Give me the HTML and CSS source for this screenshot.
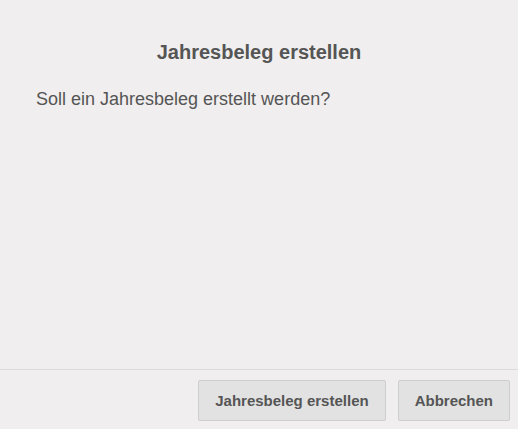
FILE: index.html
```html
<!DOCTYPE html>
<html lang="de">
<head>
    <meta charset="UTF-8">
    <title>Jahresbeleg erstellen</title>
    <link rel="stylesheet" href="styles.css">
</head>
<body>
    <div class="dialog">
        <div class="dialog-content">
            <h2 class="dialog-title">Jahresbeleg erstellen</h2>
            <p class="dialog-text">Soll ein Jahresbeleg erstellt werden?</p>
        </div>
        <div class="dialog-buttons">
            <button type="button">Jahresbeleg erstellen</button>
            <button type="button">Abbrechen</button>
        </div>
    </div>
</body>
</html>
```

FILE: styles.css
```css
html, body {
    margin: 0;
    height: 100%;
}
body {
    font-family: "Liberation Sans", Arial, sans-serif;
    background-color: #f0eeee;
    color: #555;
}
.dialog {
    display: flex;
    flex-direction: column;
    height: 100%;
}
.dialog-content {
    flex: 1;
    padding: 0 36px;
}
.dialog-title {
    margin: 40px 0 0;
    font-size: 20px;
    font-weight: bold;
    text-align: center;
    line-height: 24px;
}
.dialog-text {
    margin: 24px 0 0;
    font-size: 18px;
    line-height: 22px;
}
.dialog-buttons {
    display: flex;
    justify-content: flex-end;
    gap: 12px;
    border-top: 1px solid #dcdada;
    padding: 10px 8px 8px;
}
button {
    font-family: inherit;
    font-size: 15px;
    font-weight: bold;
    color: #555;
    background-color: #e2e2e2;
    border: 1px solid #cecece;
    border-radius: 2px;
    padding: 0 16px;
    height: 41px;
    cursor: pointer;
}
button:hover {
    background-color: #d8d8d8;
}
```
